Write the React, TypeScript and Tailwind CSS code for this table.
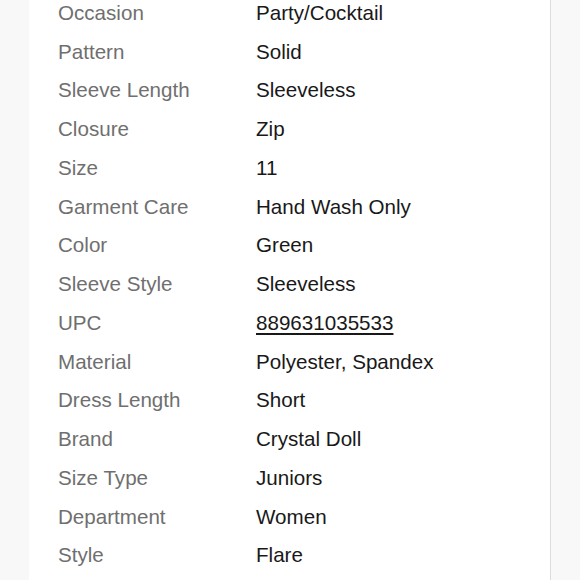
import React from 'react'

const rows: [string, string][] = [
  ['Occasion', 'Party/Cocktail'],
  ['Pattern', 'Solid'],
  ['Sleeve Length', 'Sleeveless'],
  ['Closure', 'Zip'],
  ['Size', '11'],
  ['Garment Care', 'Hand Wash Only'],
  ['Color', 'Green'],
  ['Sleeve Style', 'Sleeveless'],
  ['UPC', '889631035533'],
  ['Material', 'Polyester, Spandex'],
  ['Dress Length', 'Short'],
  ['Brand', 'Crystal Doll'],
  ['Size Type', 'Juniors'],
  ['Department', 'Women'],
  ['Style', 'Flare'],
]

function App() {
  return (
    <div className="w-[580px] h-[580px] overflow-hidden bg-[#f8f8f8] flex" style={{ fontFamily: '"Liberation Sans", Arial, sans-serif' }}>
      <div className="ml-[29px] w-[522px] h-full bg-white border-r border-[#dcdcdc] shrink-0">
        <div className="mt-[-6px] pl-[29px]">
          {rows.map(([label, value], index) => (
            <div key={index} className="flex h-[38.75px] items-center text-[20.6px]">
              <div className="w-[198px] text-[#6f6f6f]">{label}</div>
              <div className={value === '889631035533' ? 'text-[#191919] underline underline-offset-[3px]' : 'text-[#191919]'}>
                {value}
              </div>
            </div>
          ))}
        </div>
      </div>
    </div>
  )
}

export default App
